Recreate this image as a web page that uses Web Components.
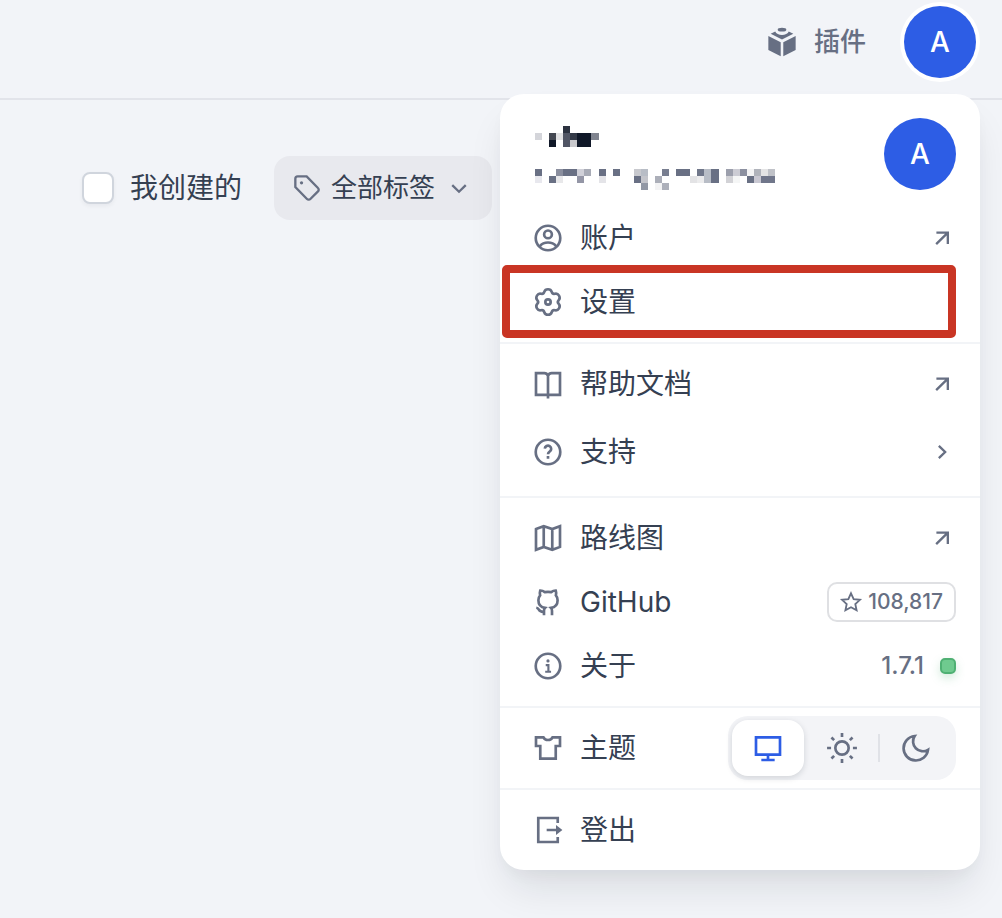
<!DOCTYPE html>
<html lang="zh-CN">
<head>
<meta charset="utf-8">
<meta name="viewport" content="width=device-width, initial-scale=1">
<title>工作室</title>
<style>
  body {
    margin: 0;
    min-height: 100vh;
    background: #f2f4f8;
    color: #354052;
    font: 28px/40px Inter, "Noto Sans CJK SC", sans-serif;
    --muted: #676f83;
    --blue: #2d5de5;
    --line: #f2f4f7;
  }
</style>
</head>
<body>
<studio-page></studio-page>

<script>
const ICONS = {
  account: '<circle cx="12" cy="12" r="9.2"/><circle cx="12" cy="9.3" r="2.9"/><path d="M5.8 18.2C7.4 16.3 9.5 15.4 12 15.4s4.6.9 6.2 2.8"/>',
  settings: '<path d="M12 2.45Q14.2 2.45 14.78 4.33Q15.35 6.2 17.26 5.76Q19.17 5.32 20.27 7.23Q21.37 9.13 20.04 10.57Q18.7 12 20.04 13.43Q21.37 14.87 20.27 16.78Q19.17 18.68 17.26 18.24Q15.35 17.8 14.78 19.68Q14.2 21.55 12 21.55Q9.8 21.55 9.22 19.68Q8.65 17.8 6.74 18.24Q4.83 18.68 3.73 16.78Q2.63 14.87 3.96 13.43Q5.3 12 3.96 10.57Q2.63 9.13 3.73 7.23Q4.83 5.32 6.74 5.76Q8.65 6.2 9.22 4.33Q9.8 2.45 12 2.45Z"/><circle cx="12" cy="12" r="2"/>',
  book: '<path d="M12 5.8C11.5 4.6 10.6 3.8 9.3 3.8H3v16.4h18V3.8h-6.3C13.4 3.8 12.5 4.6 12 5.8V22.8"/>',
  question: '<circle cx="12" cy="12" r="9.2"/><path d="M9.6 9.5a2.4 2.4 0 1 1 3.6 2.2c-.8.5-1.2.9-1.2 2M12 15v2"/>',
  map: '<path d="M3 5.3 8.8 3.2l6.4 2.1L21 3.2v15.5L15.2 20.8 8.8 18.7 3 20.8ZM8.8 3.2v15.5M15.2 5.3v15.5"/>',
  github: '<path d="M9 22v-3.4c0-1 .2-1.6.8-2.2-3.2-.4-5-2.4-5-5.7 0-1.5.5-2.7 1.3-3.6-.3-1.2-.3-2.5.1-3.7 1.3 0 2.5.5 3.4 1.2 1.6-.3 3.2-.3 4.8 0 .9-.7 2.1-1.2 3.4-1.2.4 1.2.4 2.5.1 3.7.8.9 1.3 2.1 1.3 3.6 0 3.3-1.8 5.3-5 5.7.6.6.8 1.2.8 2.2V22M9 19.3c-2 .3-3.2-.4-4-1.8-.4-.7-.9-1.1-1.8-1.2"/>',
  info: '<circle cx="12" cy="12" r="9.2"/><path d="M10.3 11.3h2v4.5M9.9 16.3h4.4" stroke-width="1.6"/><circle cx="12" cy="8.2" r="1.2" fill="currentColor" stroke="none"/>',
  shirt: '<path d="M8.6 4H3v6.5h3.2V20h11.6v-9.5H21V4h-5.6a3.7 3.3 0 0 1-6.8 0Z"/>',
  logout: '<path d="M19.3 6.8V3H4.7v18h14.6v-3.8M11 12h8"/><path d="M18 8.2 22.8 12 18 15.8Z" fill="currentColor" stroke="none"/>',
  external: '<path d="M7.2 7.4H17v9.8M17 7.4 7 17.3"/>',
  right: '<path d="m9.3 6.7 5.4 5.3-5.4 5.3"/>',
  down: '<path d="m6.2 9.6 5.8 5.6 5.8-5.6"/>',
  tag: '<path d="M2 4v7.2L12 21.4a2 2 0 0 0 2.9 0l6.5-6.5a2 2 0 0 0 0-2.9L11.7 2H4a2 2 0 0 0-2 2Z"/><circle cx="7.3" cy="7.6" r="1.4" fill="currentColor" stroke="none"/>',
  star: '<path d="m12 2.5 2.9 6.3 6.9.8-5.1 4.7 1.4 6.8L12 17.7l-6.1 3.4 1.4-6.8-5.1-4.7 6.9-.8Z"/>',
  monitor: '<path d="M3 4h18v13H3ZM12 17v3.5M7 21h10"/>',
  sun: '<circle cx="12" cy="12" r="5"/><path d="M12 .8v3M12 20.2v3M.8 12h3M20.2 12h3M4.1 4.1l2 2M17.9 17.9l2 2M4.1 19.9l2-2M17.9 6.1l2-2"/>',
  moon: '<path d="M11 3A9.2 9.2 0 1 0 21 13.4 7.4 7.4 0 0 1 11 3Z"/>',
  plugin: '<g fill="currentColor" stroke="none"><ellipse cx="12" cy="1.4" rx="3.7" ry="1.7"/><path d="M6.2 3C7.5 6.9 16.5 6.9 17.8 3L21.7 4.9 12 9.9 2.3 4.9ZM.3 6.8 10.9 12.3v11.9L.3 18.9ZM23.7 6.8 13.1 12.3v11.9l10.6-5.3Z"/></g>'
};

function define(name, markup, setup) {
  const template = document.createElement("template");
  template.innerHTML = markup;
  customElements.define(name, class extends HTMLElement {
    constructor() {
      super();
      this.attachShadow({ mode: "open" }).append(template.content.cloneNode(true));
    }
    connectedCallback() {
      if (setup) setup(this, this.shadowRoot);
    }
  });
}

define("ui-icon", `
  <style>
    :host { display: block; flex: none; width: var(--icon, 32px); height: var(--icon, 32px); color: var(--tint, var(--muted)); }
    svg { display: block; width: 100%; height: 100%; overflow: visible; fill: none; stroke: currentColor; stroke-width: 2; }
  </style>
  <svg viewBox="0 0 24 24" aria-hidden="true"></svg>`,
  (host, root) => { root.querySelector("svg").innerHTML = ICONS[host.getAttribute("name")]; });

define("user-avatar", `
  <style>
    :host { display: grid; place-items: center; flex: none; width: 72px; height: 72px; border-radius: 50%; background: var(--blue); color: #fff; font-weight: 500; }
    :host([ring]) { box-shadow: 0 0 0 4px #fff; }
  </style>
  <slot></slot>`);

define("top-bar", `
  <style>
    :host { display: block; border-bottom: 2px solid #e2e4ea; }
    header { display: flex; justify-content: flex-end; align-items: center; gap: 38px; padding: 6px 26px 20px 24px; }
    a { display: flex; align-items: center; gap: 18px; color: var(--muted); font-size: 26px; font-weight: 500; text-decoration: none; --icon: 28px; }
    button { all: unset; cursor: pointer; }
  </style>
  <header>
    <a href="#plugins"><ui-icon name="plugin"></ui-icon>插件</a>
    <button type="button" aria-label="用户菜单"><user-avatar ring>A</user-avatar></button>
  </header>`);

define("filter-bar", `
  <style>
    :host { display: flex; align-items: center; gap: 32px; padding: 56px 82px; }
    label { display: flex; align-items: center; gap: 16px; }
    input { appearance: none; box-sizing: border-box; width: 32px; height: 32px; margin: 0; border: 2px solid #d0d5dd; border-radius: 8px; background: #fff; box-shadow: 0 2px 4px #1018280d; }
    button { display: flex; align-items: center; gap: 10px; height: 64px; padding: 0 19px; border: 0; border-radius: 16px; background: #e8e9ee; color: inherit; font: inherit; font-size: 26px; white-space: nowrap; --icon: 28px; }
  </style>
  <label><input type="checkbox">我创建的</label>
  <button type="button" aria-haspopup="listbox"><ui-icon name="tag"></ui-icon>全部标签<ui-icon name="down"></ui-icon></button>`);

define("menu-group", `
  <style>
    :host { display: block; padding: 8px 0; border-bottom: 2px solid var(--line); }
    :host(:last-of-type) { border-bottom: 0; }
  </style>
  <slot></slot>`);

define("menu-item", `
  <style>
    :host { display: block; position: relative; }
    a { display: flex; align-items: center; gap: 16px; min-height: 64px; padding: 0 24px 0 32px; color: inherit; text-decoration: none; }
    :host([tall]) a { min-height: 72px; }
    .label { flex: 1; }
    :host([marked])::after { content: ""; position: absolute; inset: -5px 24px -4px 2px; border: 8px solid #c93524; border-radius: 5px; pointer-events: none; }
  </style>
  <a><span class="label"><slot></slot></span><slot name="end"></slot></a>`,
  (host, root) => {
    const link = root.querySelector("a");
    link.setAttribute("href", host.getAttribute("href"));
    const icon = document.createElement("ui-icon");
    icon.setAttribute("name", host.getAttribute("icon"));
    link.prepend(icon);
  });

define("masked-identity", `
  <style>
    :host { display: block; padding-top: 8px; }
    svg { display: block; width: 240px; height: 64px; shape-rendering: crispEdges; }
  </style>
  <svg viewBox="0 0 34 9" role="img" aria-label="已隐藏的用户信息"></svg>`,
  (host, root) => {
    const rows = {
      0: "4:2c3240",
      1: "0:d4d5da 2:444852 3:e2e2e4 4:505564 5:343a48 6:101828 7:101828 8:80848f",
      2: "2:101828 4:505564 5:c8c8cc 6:101828 7:101828",
      6: "0:697084 3:8a8e9e 4:697084 5:697084 6:d0d0d8 7:a8abb6 9:697084 11:697084 14:c8c9ce 15:b8bdc6 18:787e90 20:697084 21:697084 23:70778a 24:b8bdc6 25:697084 27:9c9fac 28:ccccd4 29:8c90a0 30:f3f3f4 31:b0b3bb 32:e4e4e5 33:c0c2c8",
      7: "0:e8e8ee 2:697084 3:e8e8ea 6:9496a6 9:e4e4e8 14:697084 15:c4c5cb 17:acafb9 22:e3e3e5 23:ececed 24:b8bdc6 25:697084 27:d2d2d6 28:f5f6f6 30:697084 31:c9c8d2 32:70768a 33:70768a",
      8: "15:9298a5 17:f3f3f4 18:adb0ba"
    };
    root.querySelector("svg").innerHTML = Object.entries(rows).map(([y, cells]) =>
      cells.split(" ").map(cell => {
        const [x, color] = cell.split(":");
        return `<rect x="${x}" y="${y}" width="1" height="1" fill="#${color}"/>`;
      }).join("")).join("");
  });

define("star-count", `
  <style>
    :host { display: flex; align-items: center; gap: 6px; padding: 0 11px; border: 2px solid #dfe0e3; border-radius: 10px; color: var(--muted); font-size: 21px; line-height: 36px; font-weight: 500; --icon: 22px; }
  </style>
  <ui-icon name="star"></ui-icon><slot></slot>`);

define("version-status", `
  <style>
    :host { display: flex; align-items: center; gap: 16px; color: var(--muted); font-size: 24px; font-weight: 500; }
    i { box-sizing: border-box; width: 16px; height: 16px; border: 2px solid #4fb073; border-radius: 5px; background: #6fca8f; box-shadow: 0 4px 10px #4fb07340; }
  </style>
  <slot></slot><i></i>`);

define("theme-row", `
  <style>
    :host { display: flex; align-items: center; gap: 16px; padding: 8px 24px 8px 32px; border-bottom: 2px solid var(--line); }
    .label { flex: 1; }
    .switch { display: flex; align-items: center; gap: 2px; padding: 4px; border-radius: 20px; background: #f3f4f7; }
    button { display: grid; place-items: center; width: 72px; height: 56px; padding: 0; border: 0; border-radius: 16px; background: none; }
    button[aria-pressed="true"] { background: #fff; box-shadow: 0 2px 6px #10182826; --tint: var(--blue); }
    button:last-child { margin-left: -2px; }
    hr { width: 2px; height: 28px; margin: 0 0 0 -2px; border: 0; background: #e0e2e7; }
  </style>
  <ui-icon name="shirt"></ui-icon>
  <span class="label">主题</span>
  <div class="switch" role="group" aria-label="主题">
    <button type="button" aria-pressed="true" aria-label="跟随系统"><ui-icon name="monitor"></ui-icon></button>
    <button type="button" aria-pressed="false" aria-label="浅色"><ui-icon name="sun"></ui-icon></button>
    <hr>
    <button type="button" aria-pressed="false" aria-label="深色"><ui-icon name="moon"></ui-icon></button>
  </div>`);

define("account-menu", `
  <style>
    :host { display: block; box-sizing: border-box; width: 480px; max-width: calc(100vw - 44px); border-radius: 24px; background: #fff; box-shadow: 0 24px 40px -8px #1018281c, 0 8px 16px -4px #1018280a; }
    .user { display: flex; justify-content: space-between; align-items: flex-start; padding: 24px 24px 8px 35px; }
    .small { --icon: 28px; }
  </style>
  <div class="user"><masked-identity></masked-identity><user-avatar>A</user-avatar></div>
  <menu-group>
    <menu-item icon="account" href="#account">账户<ui-icon class="small" slot="end" name="external"></ui-icon></menu-item>
    <menu-item icon="settings" href="#settings" marked>设置</menu-item>
  </menu-group>
  <menu-group>
    <menu-item icon="book" href="#docs">帮助文档<ui-icon class="small" slot="end" name="external"></ui-icon></menu-item>
    <menu-item icon="question" href="#support" tall>支持<ui-icon class="small" slot="end" name="right"></ui-icon></menu-item>
  </menu-group>
  <menu-group>
    <menu-item icon="map" href="#roadmap">路线图<ui-icon class="small" slot="end" name="external"></ui-icon></menu-item>
    <menu-item icon="github" href="#github">GitHub<star-count slot="end">108,817</star-count></menu-item>
    <menu-item icon="info" href="#about">关于<version-status slot="end">1.7.1</version-status></menu-item>
  </menu-group>
  <theme-row></theme-row>
  <menu-group>
    <menu-item icon="logout" href="#logout">登出</menu-item>
  </menu-group>`);

define("studio-page", `
  <style>
    :host { display: block; position: relative; }
    account-menu { position: absolute; top: 94px; right: 22px; }
  </style>
  <top-bar></top-bar>
  <main><filter-bar></filter-bar></main>
  <account-menu></account-menu>`);
</script>
</body>
</html>
